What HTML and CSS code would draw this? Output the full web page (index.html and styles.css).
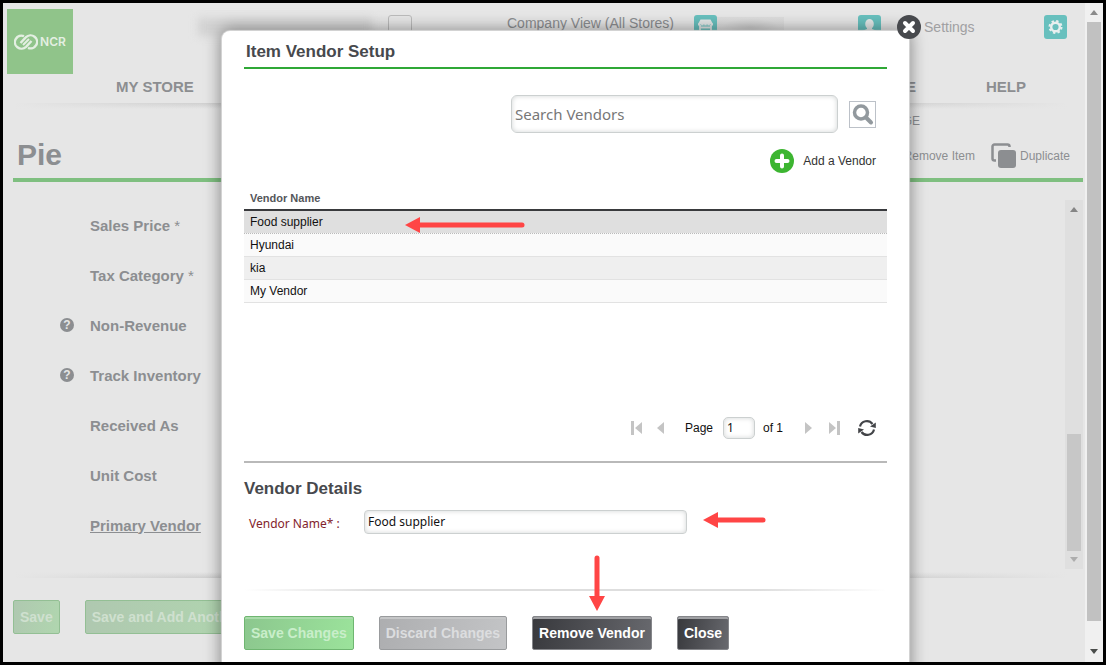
FILE: index.html
```html
<!DOCTYPE html>
<html lang="en">
<head>
<meta charset="utf-8">
<title>Item Vendor Setup</title>
<link rel="stylesheet" href="styles.css">
</head>
<body>
<div class="page">
  <header class="header">
    <div class="logo">
      <svg width="24" height="16" viewBox="0 0 24 16" fill="none" stroke="#e4efe2" stroke-width="2.400">
        <path d="M10 2.200A6.500 6.500 0 1 0 12 12.800L17.500 7"/>
        <path d="M14 13.800A6.500 6.500 0 1 0 12 3.200L6.500 9"/>
        <path d="M9 11 15 5" stroke-width="2"/>
      </svg>
      <span>NCR</span>
    </div>
    <div class="header-main">
      <div class="topbar">
        <div class="account-smudge"></div>
        <input class="box" type="checkbox" aria-label="Select account">
        <span class="company">Company View (All Stores)</span>
        <svg class="tile store" width="23" height="24" viewBox="0 0 23 24">
          <rect width="23" height="24" rx="3" fill="#68c0be"/>
          <path d="M6.500 4.500h10L19 9H4z" fill="#e4e8e8"/>
          <path d="M4 9.500h15" stroke="#e4e8e8" stroke-width="2" stroke-dasharray="2.600 .5"/>
          <path d="M6 10v9M17 10v9M6 12.500h11" stroke="#e4e8e8" stroke-width="1.800"/>
        </svg>
        <div class="name-smudge"></div>
        <svg class="tile user" width="23" height="24" viewBox="0 0 23 24">
          <rect width="23" height="24" rx="3" fill="#68c0be"/>
          <ellipse cx="11.500" cy="9" rx="4.300" ry="5" fill="#e4e8e8"/>
          <path d="M9 12h5v2l5 2v4H4v-4l5-2z" fill="#e4e8e8"/>
        </svg>
        <a class="settings" href="#">Settings</a>
        <svg class="tile gear" width="23" height="24" viewBox="0 0 23 24">
          <rect width="23" height="24" rx="3" fill="#68c0be"/>
          <circle cx="11.500" cy="12" r="4.300" fill="none" stroke="#e8efef" stroke-width="2.400"/>
          <circle cx="11.500" cy="12" r="6" fill="none" stroke="#e8efef" stroke-width="2" stroke-dasharray="2.350 2.362"/>
        </svg>
      </div>
      <nav class="nav">
        <a href="#">MY STORE</a>
        <a class="nav-mid" href="#">E</a>
        <a href="#">HELP</a>
      </nav>
    </div>
  </header>
  <div class="shade top-shade"></div>
  <div class="subnav"><span>PAGE</span></div>
  <div class="title-row">
    <h1>Pie</h1>
    <a class="remove-item" href="#">Remove Item</a>
    <a class="duplicate" href="#">
      <svg width="26" height="26" viewBox="0 0 26 26">
        <path d="M5 17.500H3.500a2 2 0 0 1-2-2V3.500a2 2 0 0 1 2-2H16.500a2 2 0 0 1 2 2V4" fill="none" stroke="#8c8e91" stroke-width="2.500"/>
        <rect x="7" y="7" width="18" height="18" rx="3" fill="#8c8e91"/>
      </svg>
      Duplicate</a>
  </div>
  <div class="form-area">
    <div class="fields">
      <div class="field"><span></span><span>Sales Price <small>*</small></span></div>
      <div class="field"><span></span><span>Tax Category <small>*</small></span></div>
      <div class="field"><span class="help">?</span><span>Non-Revenue</span></div>
      <div class="field"><span class="help">?</span><span>Track Inventory</span></div>
      <div class="field"><span></span><span>Received As</span></div>
      <div class="field"><span></span><span>Unit Cost</span></div>
      <div class="field"><span></span><a href="#">Primary Vendor</a></div>
    </div>
    <div class="inner-scroll">
      <svg width="8" height="5" viewBox="0 0 8 5"><path d="M0 5 4 0 8 5z" fill="#858585"/></svg>
      <div class="inner-thumb"></div>
      <svg width="8" height="5" viewBox="0 0 8 5"><path d="M0 0 4 5 8 0z" fill="#adadad"/></svg>
    </div>
  </div>
  <div class="shade"></div>
  <div class="page-actions">
    <button class="btn faded">Save</button>
    <button class="btn faded">Save and Add Another</button>
  </div>

  <section class="modal" role="dialog" aria-labelledby="modal-title">
    <button class="close-x" aria-label="Close dialog">
      <svg width="24" height="24" viewBox="0 0 24 24">
        <circle cx="12" cy="12" r="12" fill="#47494d"/>
        <path d="M8 8l8 8M16 8l-8 8" stroke="#fff" stroke-width="4" stroke-linecap="round"/>
      </svg>
    </button>
    <h2 class="modal-title" id="modal-title">Item Vendor Setup</h2>
    <div class="search-row">
      <input class="search" type="text" placeholder="Search Vendors" aria-label="Search Vendors">
      <button class="search-btn" aria-label="Search">
        <svg width="25" height="25" viewBox="0 0 25 25" fill="none" stroke="#92999e">
          <circle cx="11" cy="10.500" r="6.500" stroke-width="3.500"/>
          <path d="M16 15.500 21 20.500" stroke-width="4" stroke-linecap="round"/>
        </svg>
      </button>
    </div>
    <button class="add">
      <svg width="24" height="24" viewBox="0 0 24 24">
        <circle cx="12" cy="12" r="12" fill="#3db531"/>
        <path d="M12 6.500v11M6.500 12h11" stroke="#fff" stroke-width="4" stroke-linecap="round"/>
      </svg>
      Add a Vendor</button>
    <table class="vendors">
      <thead><tr><th>Vendor Name</th></tr></thead>
      <tbody>
        <tr class="selected"><td>Food supplier</td></tr>
        <tr><td>Hyundai</td></tr>
        <tr class="alt"><td>kia</td></tr>
        <tr><td>My Vendor</td></tr>
      </tbody>
    </table>
    <div class="pager">
      <button aria-label="First page"><svg width="12" height="14" viewBox="0 0 12 14" fill="#c4c4c4"><path d="M1 0h3v14H1zM12 1v12L5 7z"/></svg></button>
      <button class="prev" aria-label="Previous page"><svg width="7" height="12" viewBox="0 0 7 12" fill="#c4c4c4"><path d="M7 0v12L0 6z"/></svg></button>
      <label for="page-no">Page</label>
      <input id="page-no" type="text" value="1">
      <span>of 1</span>
      <button class="next" aria-label="Next page"><svg width="7" height="12" viewBox="0 0 7 12" fill="#c4c4c4"><path d="M0 0v12l7-6z"/></svg></button>
      <button class="last" aria-label="Last page"><svg width="12" height="14" viewBox="0 0 12 14" fill="#c4c4c4"><path d="M8 0h3v14H8zM0 1v12l7-6z"/></svg></button>
      <button class="refresh" aria-label="Refresh">
        <svg width="18" height="18" viewBox="0 0 18 18" fill="none" stroke="#424448" stroke-width="2.200">
          <path d="M2 7.500A7 7 0 0 1 14.500 5M16 10.500A7 7 0 0 1 3.500 13"/>
          <path d="M17.800 3.500V9L12 7.500zM.200 14.500V9L6 10.500z" fill="#424448" stroke="none"/>
        </svg>
      </button>
    </div>
    <h2 class="details-title">Vendor Details</h2>
    <div class="detail-row">
      <label for="vendor-name">Vendor Name* :</label>
      <input id="vendor-name" type="text" value="Food supplier">
    </div>
    <div class="modal-shade"></div>
    <div class="modal-actions">
      <button class="btn green">Save Changes</button>
      <button class="btn gray">Discard Changes</button>
      <button class="btn dark">Remove Vendor</button>
      <button class="btn dark">Close</button>
    </div>
    <svg class="arrow row-arrow" width="120" height="16" viewBox="0 0 120 16"><path d="M12 8H117" stroke="#ff4545" stroke-width="5" stroke-linecap="round"/><path d="M0 8 15 0v16z" fill="#ff4545"/></svg>
    <svg class="arrow name-arrow" width="63" height="16" viewBox="0 0 63 16"><path d="M12 8H60" stroke="#ff4545" stroke-width="5" stroke-linecap="round"/><path d="M0 8 15 0v16z" fill="#ff4545"/></svg>
    <svg class="arrow remove-arrow" width="16" height="56" viewBox="0 0 16 56"><path d="M8 3V44" stroke="#ff4545" stroke-width="5" stroke-linecap="round"/><path d="M8 56 0 41h16z" fill="#ff4545"/></svg>
  </section>
</div>
<div class="scrollbar">
  <svg width="8" height="5" viewBox="0 0 8 5"><path d="M0 5 4 0 8 5z" fill="#8b8b8b"/></svg>
  <div class="thumb"></div>
  <svg width="8" height="5" viewBox="0 0 8 5"><path d="M0 0 4 5 8 0z" fill="#4a4d4b"/></svg>
</div>
</body>
</html>
```
FILE: styles.css
```css
* { box-sizing: border-box; }
body {
  margin: 0;
  min-height: 100vh;
  display: flex;
  border: 3px solid #000;
  background: #e6e6e6;
  font-family: "Liberation Sans", Arial, sans-serif;
  font-size: 12px;
  color: #8c8e91;
}
h1, h2 { margin: 0; }
a { color: inherit; text-decoration: none; }
button, input { font-family: inherit; }
svg { display: block; flex: none; }
button { padding: 0; border: 0; background: none; color: inherit; }

.page {
  position: relative;
  flex: 1;
  min-width: 0;
  overflow: hidden;
  padding-top: 6px;
}
.header { display: flex; padding-left: 4px; height: 94px; }
.logo {
  width: 66px;
  height: 65px;
  flex: none;
  display: flex;
  align-items: center;
  justify-content: center;
  background: #90c48a;
  color: #e4efe2;
  font: 600 12px Inter, sans-serif;
  gap: 2px;
}
.header-main { flex: 1; }
.topbar { display: flex; align-items: center; height: 36px; padding-right: 18px; font-size: 14px; }
.account-smudge {
  width: 174px;
  height: 18px;
  margin: 0 16px 0 125px;
  background: #d2d2d2;
  filter: blur(4px);
}
.box {
  appearance: none;
  width: 24px;
  height: 24px;
  margin: 0;
  border: 1px solid #bbb;
  border-radius: 3px;
}
.company { margin: 0 20px 0 95px; padding-bottom: 8px; white-space: nowrap; }
.name-smudge { width: 67px; height: 20px; margin-right: 74px; background: radial-gradient(#bbb, #d8d8d8 60%); opacity: .6; }
.settings { margin: 0 auto 0 43px; color: #a0a0a2; }
.nav {
  display: flex;
  justify-content: space-between;
  padding: 33px 59px 0 43px;
  font-size: 15px;
  line-height: 18px;
  font-weight: bold;
}
.nav-mid { margin: 0 70px 0 auto; }
.shade {
  height: 6px;
  margin: 0 17px 0 10px;
  background: linear-gradient(90deg, #e6e6e6, transparent 20%, transparent 80%, #e6e6e6), linear-gradient(#cdcdcd, #e6e6e6);
}
.form-area + .shade {
  margin-top: 3px;
  background: linear-gradient(90deg, #e6e6e6, transparent 20%, transparent 80%, #e6e6e6), linear-gradient(#e6e6e6, #cccccc);
}
.subnav { display: flex; justify-content: flex-end; height: 25px; padding: 3px 165px 0 0; line-height: 18px; font-size: 12px; }
.title-row {
  display: flex;
  align-items: center;
  height: 48px;
  margin: 0 2px 0 10px;
  padding: 0 13px 0 4px;
  border-bottom: 4px solid #7fbf80;
}
h1 { margin-right: auto; font-size: 30px; line-height: 34px; padding-bottom: 2px; }
.remove-item { margin-right: 16px; }
.duplicate { display: flex; align-items: center; gap: 3px; }
.form-area { display: flex; margin: 18px 2px 0 0; }
.fields { flex: 1; padding-bottom: 19px; font-size: 15px; font-weight: bold; }
.field { display: grid; grid-template-columns: 30px 1fr; align-items: center; height: 50px; padding-left: 57px; }
.field small { font-size: 15px; font-weight: normal; }
.field a { justify-self: start; text-decoration: underline; }
.help {
  width: 14px;
  height: 14px;
  border-radius: 50%;
  background: #8c8e91;
  color: #e6e6e6;
  font-size: 12px;
  line-height: 14px;
  text-align: center;
}
.inner-scroll {
  width: 18px;
  display: flex;
  flex-direction: column;
  align-items: center;
  padding: 7px 0;
  background: #dfdfdf;
}
.inner-thumb { width: 14px; height: 117px; margin: auto 0 6px; background: #c7c7c7; }
.page-actions { display: flex; gap: 25px; padding: 22px 10px; }

.btn {
  height: 34px;
  padding: 0 6px;
  border: 1px solid;
  border-radius: 2px;
  font-size: 14px;
  font-weight: bold;
  white-space: nowrap;
}
.faded { background: linear-gradient(100deg, #afc8b0, #b0d6af); border-color: #93bf94; color: #cfe0cf; }
.green { background: linear-gradient(100deg, #8cc78e, #9be39b); border-color: #6fb671; box-shadow: inset 0 2px #aadcab; color: #c9eeca; }
.gray { background: linear-gradient(100deg, #adaeb0, #c3c4c6); border-color: #999b9d; box-shadow: inset 0 2px #c6c7c8; color: #dcdddf; }
.dark { background: linear-gradient(100deg, #38393d, #68696e); border-color: #85868a; box-shadow: inset 0 2px #a0a1a4; color: #fff; }

.modal {
  position: absolute;
  top: 28px;
  bottom: -20px;
  left: 219px;
  right: 176px;
  padding: 11px 22px 0;
  background: #fff;
  border-radius: 8px;
  box-shadow: 0 0 1px 1px #d8d8d8, 0 0 16px 2px rgba(0, 0, 0, .4);
  color: #222;
}
.close-x { position: absolute; top: -16px; right: -12px; }
.modal-title, .details-title { font-size: 17px; line-height: 20px; color: #47494d; }
.modal-title { padding: 0 2px 5px; border-bottom: 2px solid #2fa836; }
.search-row { display: flex; justify-content: flex-end; align-items: center; gap: 11px; padding: 26px 11px 0 0; }
.modal input {
  border: 1px solid #ccd0d0;
  border-radius: 5px;
  background: #fff;
  box-shadow: inset 0 0 5px #d2d5d5;
  color: #111;
  font-family: "Noto Sans", sans-serif;
  font-size: 12px;
  padding: 0 3px;
}
.modal .search { width: 327px; height: 38px; border-radius: 6px; font-size: 15px; }
.search::placeholder { color: #777; opacity: 1; }
.search-btn { border: 1px solid #bcc1c8; }
.add { display: flex; align-items: center; gap: 9px; margin: 16px 11px 0 auto; font-size: 12px; color: #333; }
.vendors { width: 100%; margin-top: 13px; border-collapse: collapse; }
.vendors th { height: 24px; padding: 0 6px; border-bottom: 2px solid #393a3d; text-align: left; font-size: 11px; color: #54565a; }
.vendors td { height: 23px; padding: 0 6px; border-bottom: 1px solid #e2e2e2; background: #fafafa; color: #111; }
.vendors .alt td { background: #efefef; }
.vendors .selected td { background: #dfdfdf; border-bottom: 1px dotted #bbb; }
.pager { display: flex; align-items: center; height: 22px; margin-top: 114px; padding-right: 11px; justify-content: flex-end; color: #111; }
.prev { margin: 0 21px 0 15px; }
.modal .pager input { width: 32px; height: 22px; margin: 0 8px 0 10px; }
.next { margin-left: 22px; }
.last { margin: 0 17px; }
.details-title { margin-top: 22px; padding-top: 16px; border-top: 2px solid #b9b9b9; }
.detail-row { display: flex; align-items: center; margin-top: 11px; padding-left: 5px; }
.detail-row label { width: 115px; padding-top: 4px; font: 12px/16px "Noto Sans", sans-serif; color: #83232b; }
.modal .detail-row input { width: 323px; height: 24px; border-radius: 4px; }
.modal-shade { height: 2px; margin-top: 55px; background: linear-gradient(90deg, #fff, #dedede 20%, #dedede 80%, #fff); }
.modal-actions { display: flex; gap: 25px; margin-top: 25px; }
.arrow { position: absolute; }
.row-arrow { left: 183px; top: 186px; }
.name-arrow { left: 481px; top: 481px; }
.remove-arrow { left: 367px; top: 524px; }

.scrollbar {
  width: 18px;
  flex: none;
  display: flex;
  flex-direction: column;
  align-items: center;
  padding: 7px 0 8px;
  background: #f0f0f0;
}
.thumb { flex: 1; width: 14px; margin: 7px 0 28px; background: #c1c1c1; }
```
